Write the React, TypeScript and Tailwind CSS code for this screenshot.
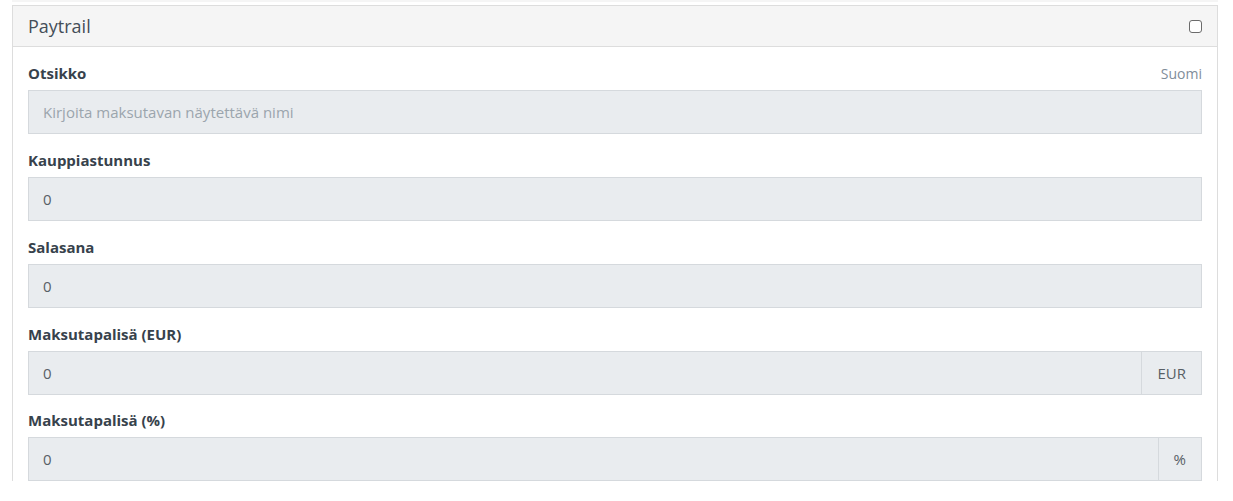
import React from "react";

const Field = ({ label, value, placeholder, addon, right, mb = "mb-[16px]" }: { label: string; value?: string; placeholder?: string; addon?: string; right?: string; mb?: string }) => (
  <div className={mb}>
    <div className="flex items-center justify-between mb-[6px] h-[21px]">
      <span className="text-[15px] font-bold text-[#37424c] leading-[21px]">{label}</span>
      {right && <span className="text-[14px] text-[#7f8d9a] leading-[21px]">{right}</span>}
    </div>
    <div className="flex h-[44px]">
      <div className="flex-1 flex items-center bg-[#e9ecef] border border-[#d5d9dd] px-[14px] text-[15px]">
        {value !== undefined ? <span className="text-[#585f66]">{value}</span> : <span className="text-[#9ba5ad]">{placeholder}</span>}
      </div>
      {addon && (
        <div className="flex items-center justify-center bg-[#e9ecef] border border-l-0 border-[#d5d9dd] px-[15px] text-[15px] text-[#585f66]">{addon}</div>
      )}
    </div>
  </div>
);

export default function App() {
  return (
    <div className="w-[1233px] h-[501px] bg-white overflow-hidden" style={{ fontFamily: '"Open Sans", sans-serif' }}>
      <div className="mx-[12px] w-[1206px] h-[2px] bg-[#f5f5f5]" />
      <div className="mx-[12px] mt-[3px] w-[1206px] border border-[#dddddd] border-b-0">
        <div className="h-[41px] bg-[#f5f5f5] border-b border-[#dddddd] flex items-center justify-between pl-[15px] pr-[15px]">
          <span className="text-[18px] text-[#444e58]">Paytrail</span>
          <span className="w-[13px] h-[13px] border border-[#6b6b6b] rounded-[3px] bg-white" />
        </div>
        <div className="px-[15px] pt-[16px]">
          <Field label="Otsikko" placeholder="Kirjoita maksutavan näytettävä nimi" right="Suomi" />
          <Field label="Kauppiastunnus" value="0" />
          <Field label="Salasana" value="0" />
          <Field label="Maksutapalisä (EUR)" value="0" addon="EUR" mb="mb-[15px]" />
          <Field label="Maksutapalisä (%)" value="0" addon="%" />
        </div>
      </div>
    </div>
  );
}
